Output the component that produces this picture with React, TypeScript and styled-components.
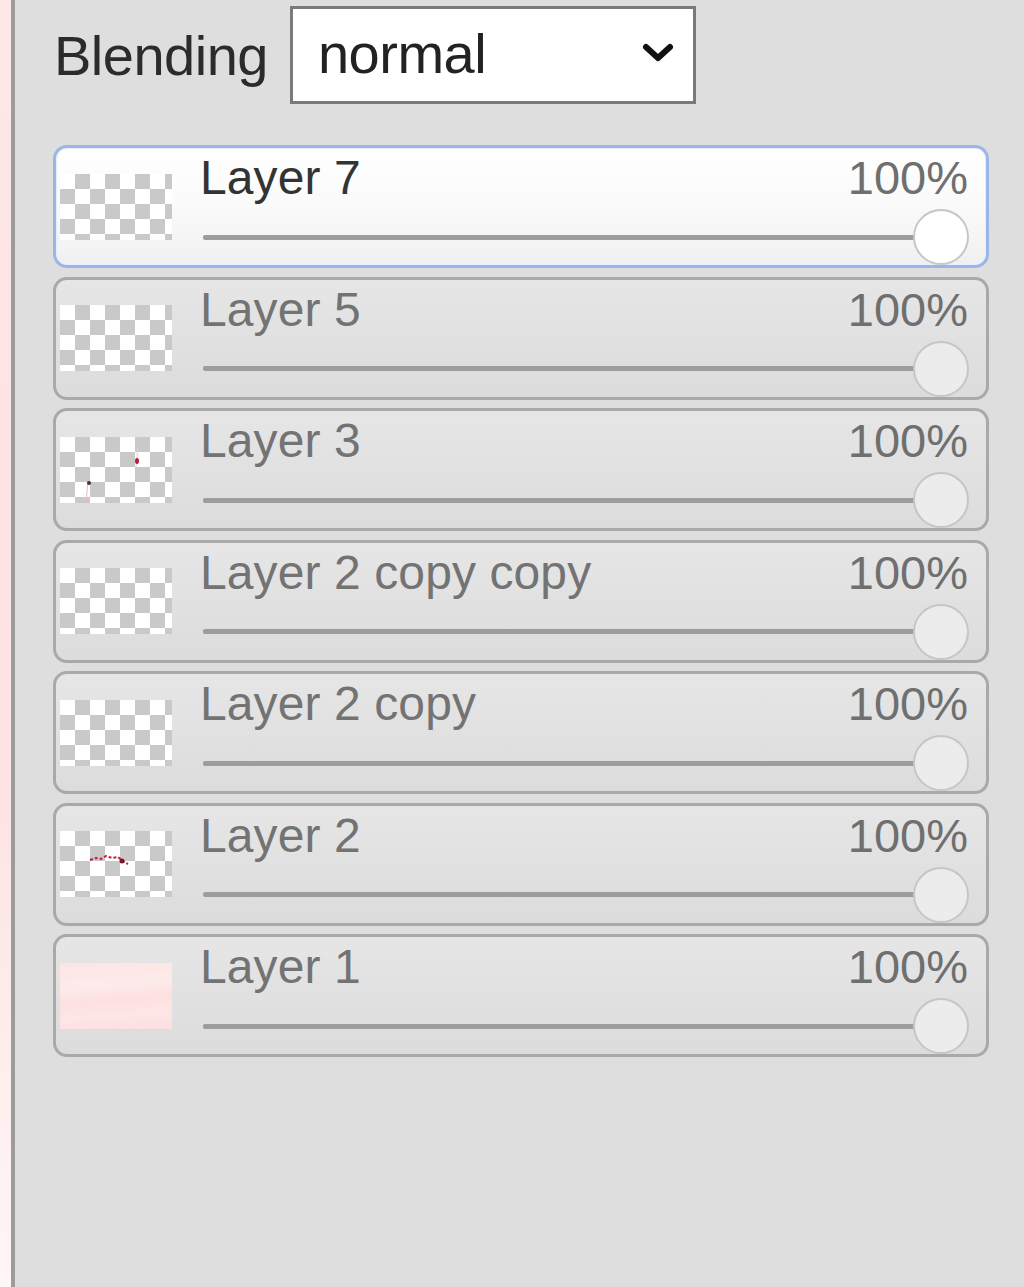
import React from "react";
import styled, { createGlobalStyle, css } from "styled-components";

const Global = createGlobalStyle`
  html, body { margin: 0; padding: 0; }
  body {
    background: #dedede;
    font-family: "Liberation Sans", Arial, sans-serif;
    width: 1024px;
    height: 1287px;
    overflow: hidden;
  }
`;

const Page = styled.div`
  display: flex;
  height: 1287px;
`;

const CanvasEdge = styled.div`
  width: 11px;
  background: linear-gradient(180deg, #fde7e7 0%, #fde3e3 60%, #fff6f6 100%);
`;

const Divider = styled.div`
  width: 4px;
  background: #9c9c9c;
`;

const Panel = styled.div`
  flex: 1;
  display: flex;
  flex-direction: column;
  padding: 6px 0 0 38px;
`;

const BlendRow = styled.div`
  display: flex;
  align-items: center;
  gap: 22px;
  height: 98px;
  padding-left: 1px;
`;

const Label = styled.span`
  font-size: 56px;
  color: #2b2b2b;
  letter-spacing: -0.5px;
`;

const SelectBox = styled.div`
  box-sizing: border-box;
  width: 406px;
  height: 98px;
  border: 3px solid #7a7a7a;
  background: #fff;
  display: flex;
  align-items: center;
  justify-content: space-between;
  padding: 0 18px 4px 25px;
  font-size: 56px;
  color: #222;
  letter-spacing: -0.5px;
`;

const List = styled.div`
  display: flex;
  flex-direction: column;
  gap: 8.5px;
  margin-top: 41px;
  width: 936px;
`;

const Row = styled.div<{ $active?: boolean }>`
  box-sizing: border-box;
  height: 123px;
  border-radius: 14px;
  border: 3px solid #a9a9a9;
  background: linear-gradient(180deg, #e6e6e6 0%, #e1e1e1 50%, #dcdcdc 100%);
  display: grid;
  grid-template-columns: 112px 1fr;
  column-gap: 28px;
  align-items: center;
  padding: 6px 18px 0 4px;
  ${(p) =>
    p.$active &&
    css`
      border-color: #9ab6e6;
      background: linear-gradient(180deg, #ffffff 0%, #fafafa 50%, #f0f0f0 100%);
      box-shadow: inset 0 0 0 1px #e6efff;
    `}
`;

const Thumb = styled.div<{ $kind: "checker" | "pink" }>`
  position: relative;
  width: 112px;
  height: 66px;
  margin-top: -6px;
  ${(p) =>
    p.$kind === "checker"
      ? css`
          background-color: #ffffff;
          background-image: linear-gradient(45deg, #c9c9c9 25%, transparent 25%, transparent 75%, #c9c9c9 75%),
            linear-gradient(45deg, #c9c9c9 25%, transparent 25%, transparent 75%, #c9c9c9 75%);
          background-size: 30px 30px;
          background-position: 0 0, 15px 15px;
        `
      : css`
          background: linear-gradient(175deg, #fde4e4 0%, #fdebeb 35%, #fde0e0 55%, #fde6e6 75%, #fddede 100%);
        `}
`;

const Marks = styled.svg`
  position: absolute;
  inset: 0;
`;

const Content = styled.div`
  display: flex;
  flex-direction: column;
  gap: 7px;
`;

const Head = styled.div`
  display: flex;
  justify-content: space-between;
  align-items: baseline;
  height: 48px;
  line-height: 48px;
`;

const Name = styled.span<{ $active?: boolean }>`
  font-size: 48px;
  color: ${(p) => (p.$active ? "#333333" : "#737373")};
  letter-spacing: 0.1px;
`;

const Percent = styled.span`
  font-size: 47px;
  color: #6f6f6f;
`;

const Slider = styled.div`
  display: flex;
  align-items: center;
  height: 56px;
  padding-left: 3px;
`;

const Track = styled.div`
  flex: 1;
  height: 5px;
  background: #9d9d9d;
  border-radius: 2px;
`;

const Knob = styled.div<{ $active?: boolean }>`
  box-sizing: border-box;
  width: 56px;
  height: 56px;
  border-radius: 50%;
  margin-left: -2px;
  margin-right: -1px;
  border: 2px solid #c6c6c6;
  background: ${(p) => (p.$active ? "#ffffff" : "#ececec")};
`;

type Layer = { name: string; kind: "checker" | "pink"; marks?: "l3" | "l2"; active?: boolean };

const layers: Layer[] = [
  { name: "Layer 7", kind: "checker", active: true },
  { name: "Layer 5", kind: "checker" },
  { name: "Layer 3", kind: "checker", marks: "l3" },
  { name: "Layer 2 copy copy", kind: "checker" },
  { name: "Layer 2 copy", kind: "checker" },
  { name: "Layer 2", kind: "checker", marks: "l2" },
  { name: "Layer 1", kind: "pink" },
];

function ThumbMarks({ kind }: { kind: "l3" | "l2" }) {
  if (kind === "l3") {
    return (
      <Marks width="112" height="66" viewBox="0 0 112 66">
        <line x1="28" y1="44" x2="26" y2="66" stroke="#f3b6c0" strokeWidth="1" />
        <line x1="78" y1="10" x2="76" y2="30" stroke="#f6c8d0" strokeWidth="1" />
        <ellipse cx="77" cy="24" rx="2" ry="3" fill="#b0203c" />
        <circle cx="29" cy="46" r="2" fill="#5a2a30" />
      </Marks>
    );
  }
  return (
    <Marks width="112" height="66" viewBox="0 0 112 66">
      <path d="M30 29 L36 27 L41 28 L46 25 L52 27 L58 26 L64 31 L68 33" fill="none" stroke="#c21e3a" strokeWidth="2" strokeDasharray="3 2" />
      <circle cx="62" cy="30" r="2.5" fill="#6a1a28" />
    </Marks>
  );
}

export default function App() {
  return (
    <>
      <Global />
      <Page>
        <CanvasEdge />
        <Divider />
        <Panel>
          <BlendRow>
            <Label>Blending</Label>
            <SelectBox>
              <span>normal</span>
              <svg width="34" height="24" viewBox="0 0 34 24">
                <path d="M5 6 L17 17 L29 6" fill="none" stroke="#111" strokeWidth="6" strokeLinecap="round" strokeLinejoin="round" />
              </svg>
            </SelectBox>
          </BlendRow>
          <List>
            {layers.map((l) => (
              <Row key={l.name} $active={l.active}>
                <Thumb $kind={l.kind}>{l.marks && <ThumbMarks kind={l.marks} />}</Thumb>
                <Content>
                  <Head>
                    <Name $active={l.active}>{l.name}</Name>
                    <Percent>100%</Percent>
                  </Head>
                  <Slider>
                    <Track />
                    <Knob $active={l.active} />
                  </Slider>
                </Content>
              </Row>
            ))}
          </List>
        </Panel>
      </Page>
    </>
  );
}
